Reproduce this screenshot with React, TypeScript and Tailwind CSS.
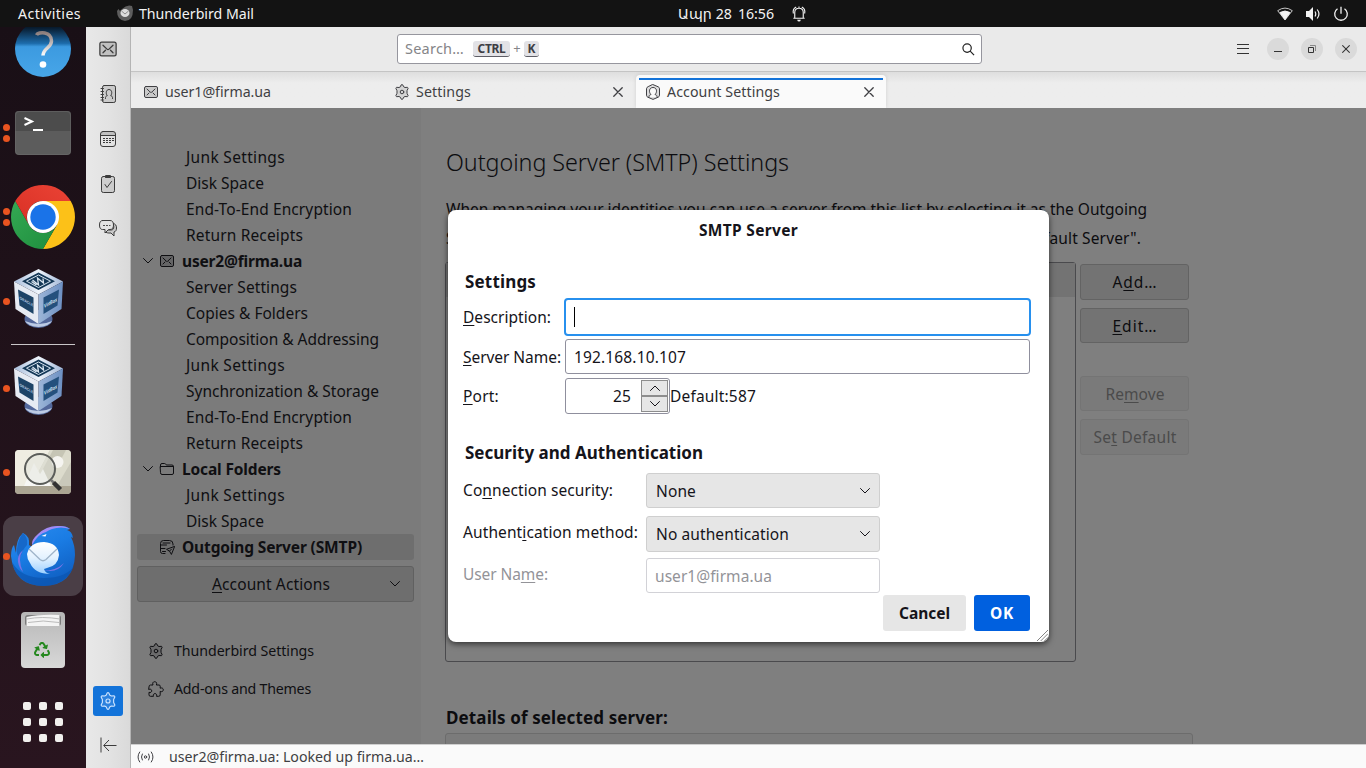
import { useLayoutEffect, useRef, useState } from 'react';
import type { ReactNode } from 'react';
import { FaRecycle } from 'react-icons/fa';

/** Single-line label whose tracking is adjusted so that it spans a set width. */
function Fit({ w, children, className = '' }: { w: number; children: ReactNode; className?: string }) {
  const ref = useRef<HTMLSpanElement>(null);
  const [spacing, setSpacing] = useState(0);
  useLayoutEffect(() => {
    const el = ref.current;
    if (!el) return;
    const count = (el.textContent || '').length || 1;
    setSpacing((w - el.getBoundingClientRect().width) / count);
  }, [w]);
  return (
    <span ref={ref} className={`inline-block shrink-0 whitespace-pre ${className}`} style={{ letterSpacing: `${spacing}px` }}>
      {children}
    </span>
  );
}

/** Label set slightly low in its row. */
function Label({ w, children, className = '' }: { w: number; children: ReactNode; className?: string }) {
  return <Fit w={w} className={`pt-0.5 ${className}`}>{children}</Fit>;
}

function Key({ children }: { children: string }) {
  return <span className="underline decoration-1 underline-offset-2">{children}</span>;
}

/* ---------- line icons ---------- */

type IconProps = { className?: string };
const base = { viewBox: '0 0 16 16', fill: 'none', stroke: 'currentColor', strokeLinecap: 'round', strokeLinejoin: 'round' } as const;

const Mail = ({ className = 'size-4' }: IconProps) => (
  <svg {...base} className={`shrink-0 ${className}`}>
    <rect x="1.5" y="2.5" width="13" height="11" rx="1.5" fill="currentColor" fillOpacity=".2" />
    <path d="M4 5l3.2 3.1c.5.5 1.1.5 1.6 0L12 5M4 11l2-2M12 11l-2-2" />
  </svg>
);
const Book = ({ className = 'size-[18px]' }: IconProps) => (
  <svg {...base} viewBox="0 0 18 18" className={`shrink-0 ${className}`}>
    <rect x="3.5" y=".5" width="13" height="17" rx="1.7" fill="currentColor" fillOpacity=".14" />
    <path d="M2 3.500h2.500M2 6.500h2.500M2 9.500h2.500M2 12.500h2.500M2 15h2.500" />
    <path d="M6.500 13.500v-1c0-1 .7-1.500 1.800-1.800C6.500 8.500 7 4.500 10 4.500s3.500 4 1.700 6.200c1.100.3 1.800.8 1.800 1.800v1" />
  </svg>
);
const Calendar = ({ className = 'size-[18px]' }: IconProps) => (
  <svg {...base} viewBox="0 0 18 18" className={`shrink-0 ${className}`}>
    <path d="M1.500 5.500V4q0-2.500 2.500-2.500h10q2.500 0 2.500 2.500v1.500z" fill="currentColor" fillOpacity=".2" stroke="none" />
    <rect x="1.500" y="1.500" width="15" height="15" rx="2.500" />
    <path d="M2 5.500h14" />
    <path strokeDasharray="2 1" strokeLinecap="butt" d="M4 8.500h11M4 10.500h11M4 12.500h8" />
  </svg>
);
const Tasks = ({ className = 'size-[18px]' }: IconProps) => (
  <svg {...base} viewBox="0 0 18 18" className={`shrink-0 ${className}`}>
    <rect x="2.500" y="1.500" width="13" height="16" rx="1.800" fill="currentColor" fillOpacity=".13" />
    <path d="M5.500 1.500l1-1h5l1 1M6.500 2.500h5M6 9.500l2 3 4.500-6" />
  </svg>
);
const Chat = ({ className = 'size-5' }: IconProps) => (
  <svg {...base} viewBox="0 0 20 20" className={`shrink-0 ${className}`}>
    <path d="M15.500 4.500c2 .5 3 1.800 3 4.500 0 2-.6 3.500-2.500 4v4l-3-3c-3 .2-5-.2-6-1.500l3-1.500h3c2 0 2.800-1 2.800-3z" fill="currentColor" fillOpacity=".14" />
    <path d="M4.500 1.500h7.500q3.500 0 3.500 4.500t-3.500 4.500h-1.500L7 14v-3.500H4.500Q1.500 10.500 1.500 6t3-4.500z" fill="#e2e2e2" />
    <path d="M5.500 6.500h1M8.500 6.500h1M11.500 6.500h.5" />
  </svg>
);
const Gear = ({ className = 'size-4' }: IconProps) => (
  <svg {...base} className={`shrink-0 ${className}`}>
    <path d="M7.300.8q.7-.5 1.400 0l1 2 1.300.7 2.300-.2q.8.300.8 1.100L13 6.700v2.600l1.100 2.300q0 .8-.8 1.100l-2.300-.2-1.300.7-1 2q-.7.500-1.400 0l-1-2-1.300-.7-2.300.2q-.8-.3-.8-1.100L3 9.300V6.700L1.900 4.400q0-.8.8-1.100l2.300.2 1.300-.7z" fill="currentColor" fillOpacity=".14" />
    <circle cx="8" cy="8" r="1.800" />
  </svg>
);
const Account = ({ className = 'size-4' }: IconProps) => (
  <svg {...base} className={`shrink-0 ${className}`}>
    <path d="M8 .6l5.200 2.200q1.300.6 1.300 2v6.400q0 1.400-1.300 2L8 15.400l-5.200-2.200q-1.300-.6-1.300-2V4.800q0-1.400 1.300-2z" fill="currentColor" fillOpacity=".15" />
    <path d="M4 13v-.7c0-.9.800-1.300 2-1.800C3.500 8.300 4 3.500 8 3.500s4.500 4.800 2 7c1.200.5 2 .9 2 1.800v.7" fill="#fafafa" />
  </svg>
);
const Folder = () => (
  <svg {...base} className="size-4 shrink-0">
    <path d="M1.500 5.500h13V12q0 1.500-1.500 1.500H3Q1.500 13.500 1.500 12zM1.500 6V4q0-1.500 1.500-1.500h2.500q1 0 1.500 1l.3.500H13q1.500 0 1.500 1.500v1" />
  </svg>
);
const Outgoing = () => (
  <svg {...base} className="size-4 shrink-0">
    <path d="M6 14.500H3.500q-2 0-2-2v-8q0-3 3-3h6q3.500 0 3.500 3.500v1M1.500 6h6M4 4h7M1.500 9.500h4.500M3.500 12.500h3" />
    <path d="M15.300 7.500l-7.800 2.800 3 1.800 1.700 3zM10.500 12.100l2-2" />
  </svg>
);
const Puzzle = () => (
  <svg {...base} className="size-4 shrink-0">
    <path d="M1 5.500Q1 4 2.500 4H5c-.8-1.800 0-3.300 1.700-3.300S9.200 2.200 8.400 4H11q1.200 0 1.200 1.200v2c1.700-.7 3.100.1 3.100 1.600s-1.400 2.300-3.100 1.600v3.400q0 1.500-1.500 1.500H8.500c.6-1.600-.1-2.700-1.500-2.700s-2.100 1.100-1.500 2.700H2.500Q1 15.300 1 13.800v-2.500c1.600.6 2.700-.1 2.700-1.500S2.600 7.700 1 8.300z" />
  </svg>
);
const Close = ({ className = 'size-[10px]' }: IconProps) => (
  <svg viewBox="0 0 10 10" className={`shrink-0 ${className}`} fill="none" stroke="currentColor" strokeWidth="1.300" strokeLinecap="round">
    <path d="M.8.8l8.400 8.400M9.200.8L.8 9.200" />
  </svg>
);
const Chevron = ({ className = '' }: IconProps) => (
  <svg viewBox="0 0 12 8" className={`h-2 w-3 shrink-0 ${className}`} fill="none" stroke="currentColor" strokeLinecap="round" strokeLinejoin="round">
    <path d="M1.500 1.500L6 6l4.500-4.500" />
  </svg>
);

/* ---------- dock artwork ---------- */

const HelpArt = () => (
  <svg viewBox="0 0 64 64" className="size-16">
    <defs>
      <linearGradient id="helpFill" x1="0" y1="0" x2="0" y2="1">
        <stop offset=".12" stopColor="#081b2e" />
        <stop offset=".4" stopColor="#1d6cab" />
        <stop offset=".46" stopColor="#3c9ae0" />
        <stop offset="1" stopColor="#47a6e8" />
      </linearGradient>
      <linearGradient id="helpMark" x1="0" y1="0" x2="0" y2="1">
        <stop offset="0" stopColor="#8d7e7c" />
        <stop offset="1" stopColor="#fff" />
      </linearGradient>
    </defs>
    <circle cx="32" cy="32" r="28" fill="url(#helpFill)" />
    <path d="M25.500 18c2-3.500 15-4 15 6 0 7-8.500 7-8.500 14.500" fill="none" stroke="url(#helpMark)" strokeWidth="3.500" />
    <circle cx="32" cy="47.500" r="3.300" fill="#fff" />
  </svg>
);
const TerminalArt = () => (
  <svg viewBox="0 0 64 64" className="size-16">
    <rect x="4" y="10" width="56" height="44" rx="4" fill="#5c5c5c" />
    <path d="M4 30V14q0-4 4-4h48q4 0 4 4v16z" fill="#4c4c4c" />
    <path d="M13.500 17l7.500 3.500-7.500 3.500" fill="none" stroke="#fff" strokeWidth="2" />
    <path d="M22 29h10" stroke="#fff" strokeWidth="2" />
    <rect x="4.500" y="10.500" width="55" height="43" rx="3.500" fill="none" stroke="#6d6d6d" strokeOpacity=".5" />
  </svg>
);
const ChromeArt = () => (
  <svg viewBox="0 0 64 64" className="size-16">
    <defs>
      <linearGradient id="chRed" x1="0" y1="1" x2="1" y2="0"><stop offset="0" stopColor="#d93025" /><stop offset="1" stopColor="#ea4335" /></linearGradient>
      <linearGradient id="chGreen" x1="0" y1="0" x2="1" y2="1"><stop offset="0" stopColor="#34a853" /><stop offset="1" stopColor="#1e8e3e" /></linearGradient>
    </defs>
    <path d="M32 16h27.700A32 32 0 0 1 32 64L45.900 40z" fill="#fcc118" />
    <path d="M45.900 40L32 64A32 32 0 0 1 4.300 16L18.100 40A16 16 0 0 0 45.900 40z" fill="url(#chGreen)" />
    <path d="M4.300 16A32 32 0 0 1 59.700 16H32A16 16 0 0 0 18.100 40z" fill="url(#chRed)" />
    <circle cx="32" cy="32" r="16" fill="#fff" />
    <circle cx="32" cy="32" r="12.700" fill="#1a73e8" />
  </svg>
);
const BoxArt = () => (
  <svg viewBox="0 2 64 64" className="size-16">
    <defs>
      <linearGradient id="vbTop" x1="0" x2="1"><stop offset="0" stopColor="#a9bedc" /><stop offset=".5" stopColor="#eef4fb" /><stop offset="1" stopColor="#a3b8d8" /></linearGradient>
      <linearGradient id="vbRight" x1="0" x2="1"><stop offset="0" stopColor="#9db6d8" /><stop offset="1" stopColor="#6c8fc2" /></linearGradient>
    </defs>
    <ellipse cx="27.500" cy="52" rx="14" ry="9" fill="#53689b" />
    <path d="M14 54a14 8 0 0 0 27 0q-13 6-27 0z" fill="#bccbe4" />
    <path d="M27.500 2L52 14.500 27.500 27.500 3 14.500z" fill="url(#vbTop)" />
    <path d="M3 14.500l24.500 13V57L4.500 42z" fill="#e6ebf3" />
    <path d="M52 14.500L27.500 27.500V57L50.500 42z" fill="url(#vbRight)" />
    <path d="M27.500 5.500L44 14.200 27.500 23 11 14.200z" fill="#143857" />
    <path d="M27.500 8L39.500 14.200 27.500 20.500 15.500 14.200z" fill="none" stroke="#d4e2ef" />
    <path d="M21.500 13l6 5-1-7 6 5-.5-4.500M20.500 14.500l5 3.500" fill="none" stroke="#dce8f3" strokeWidth="1.300" />
    <path d="M7 22.500l15.500 8v16.500l-14-8.500z" fill="#1d4467" />
    <path d="M48 22.500l-15.500 8v16.500l14-8.500z" fill="#24507d" />
    <text transform="matrix(.82 .46 0 1 8.500 32)" fill="#b7cbe2" fontSize="4" fontFamily="Liberation Sans, sans-serif" fontWeight="700">ORACLE</text>
    <text transform="matrix(.8 -.42 0 1.200 33 41)" fill="#dbe8f6" fontSize="4.600" fontFamily="Liberation Sans, sans-serif" fontWeight="700">VirtBox</text>
  </svg>
);
const ViewerArt = () => (
  <svg viewBox="0 0 64 64" className="size-16">
    <rect x="4" y="10" width="56" height="44" rx="4" fill="#c9c8ba" />
    <path d="M8 10h31L20 46H4V14q0-4 4-4z" fill="#efede2" />
    <path d="M39 10h17q4 0 4 4v8L46 46H20z" fill="#dcdbcc" />
    <path d="M42 10h13L36 46h-13z" fill="#c6c5b5" />
    <circle cx="46.500" cy="22" r="6" fill="#f5f4f0" />
    <path d="M13 46l10-23 6 11 3-5 8 17z" fill="#f7f7f4" />
    <path d="M4 46h56v4q0 4-4 4H8q-4 0-4-4z" fill="#aba593" />
    <circle cx="29" cy="29" r="15" fill="#dfe3dc" fillOpacity=".45" stroke="#5b5d5a" strokeWidth="2" />
    <path d="M40 40l3 3" stroke="#777" strokeWidth="2.500" />
    <path d="M42.500 42.500l7 7" stroke="#333" strokeWidth="4.500" />
  </svg>
);
const BirdArt = () => (
  <svg viewBox="0 0 64 64" className="size-16">
    <defs>
      <linearGradient id="bird" x1="0" y1="0" x2=".5" y2="1"><stop offset="0" stopColor="#2b8cf0" /><stop offset=".5" stopColor="#1a7ce4" /><stop offset="1" stopColor="#1061c4" /></linearGradient>
      <linearGradient id="mail" x1="0" y1="0" x2="0" y2="1"><stop offset="0" stopColor="#fff" /><stop offset=".5" stopColor="#e3f2ff" /><stop offset="1" stopColor="#9ccfff" /></linearGradient>
    </defs>
    <path d="M0 32Q0 24 3 21l2 8Q5 15 12 9q7 3 6 12l3 2q0-7 8-13Q38 2 49 2q7 0 10 3l-3 1q5 1 6 8l-2-1q4 8 4 18Q63 61 33 62 3 62 0 32z" fill="url(#bird)" />
    <path d="M12 9q5 4 4 12-6 6-7 15-4-7-3-11Q7 15 12 9z" fill="#1668c9" />
    <path d="M1 38q4 22 30 24 24 0 32-20-8 12-30 12Q10 54 1 38z" fill="#0b53ae" fillOpacity=".65" />
    <path d="M21 21q-1-5 6-11Q36 1 49 2q6 0 10 3-9-3-18 0-3 1-6 3-7 1-14 13z" fill="#a18bf5" />
    <path d="M12 26q-6 9 0 22-4-4-5-10-1-7 5-12zM31 47q14 0 22-8-5 8-14 8z" fill="#7b74e6" />
    <path d="M30.500 12l5-2-1 2.500z" fill="#fff" />
    <path d="M16 30q3-12 17-12 14 1 15 13-1 11-12 13l-3 1q1 4 6 5-15 0-20-11-3-4-3-9z" fill="url(#mail)" />
    <path d="M18 25l11 10.500q3 2.500 6 0L46 25" fill="none" stroke="#9fb4c9" strokeWidth="1.300" />
  </svg>
);
const TrashArt = () => (
  <svg viewBox="0 0 64 64" className="size-16">
    <defs>
      <linearGradient id="bin" x1="0" y1="0" x2="0" y2="1"><stop offset="0" stopColor="#b7b7b7" /><stop offset="1" stopColor="#d8d8d8" /></linearGradient>
    </defs>
    <rect x="10" y="4" width="44" height="56" rx="4" fill="url(#bin)" />
    <rect x="14" y="7" width="36" height="11" rx="3" fill="#7b7b7b" />
    <path d="M15.500 18V9q14-3 33-2v11z" fill="#f4f4f4" />
    <path d="M16 11q15-3 33 0M17 14.500q15-3 31 0" fill="none" stroke="#bbb" />
    <FaRecycle x="23" y="34" width="18" height="18" color="#25881f" />
  </svg>
);

type DockEntry = { art: () => ReactNode; dots: number; active?: boolean };
const dockTop: DockEntry[] = [
  { art: TerminalArt, dots: 2 },
  { art: ChromeArt, dots: 2 },
  { art: BoxArt, dots: 1 },
];
const dockBottom: DockEntry[] = [
  { art: BoxArt, dots: 1 },
  { art: ViewerArt, dots: 1 },
  { art: BirdArt, dots: 1, active: true },
  { art: TrashArt, dots: 0 },
];

function DockItem({ art: Art, dots, active }: DockEntry) {
  return (
    <div className={`mx-[3px] my-0.5 flex h-20 shrink-0 items-center rounded-xl ${active ? 'bg-[#4a3e46]' : ''}`}>
      <div className="mr-px flex w-[7px] flex-col gap-1">
        {Array.from({ length: dots }, (_, i) => (
          <span key={i} className="size-[7px] rounded-full bg-[#e95420]" />
        ))}
      </div>
      <Art />
    </div>
  );
}

function Dock() {
  return (
    <nav className="flex w-[86px] shrink-0 flex-col overflow-hidden bg-linear-to-b from-[#190f16] to-[#29151f]">
      <div className="flex h-16 shrink-0 items-end justify-center overflow-hidden pb-[10px]"><HelpArt /></div>
      {dockTop.map((d, i) => <DockItem key={i} {...d} />)}
      <div className="mx-[11px] mt-px h-px shrink-0 bg-[#c9c6c8]" />
      <div className="h-px shrink-0" />
      {dockBottom.map((d, i) => <DockItem key={i} {...d} />)}
      <div className="ml-[23px] mt-5 grid w-10 grid-cols-3 gap-2">
        {Array.from({ length: 9 }, (_, i) => <span key={i} className="size-2 rounded-xs bg-[#f1f0ee]" />)}
      </div>
    </nav>
  );
}

/* ---------- chrome ---------- */

function TopBar() {
  return (
    <header className="grid h-[27px] shrink-0 grid-cols-[678px_1fr_auto] items-center bg-[#131313] text-[14.2px] text-[#f2f2f2]">
      <div className="flex items-center pl-[18px]">
        <Fit w={63}>Activities</Fit>
        <svg viewBox="0 0 18 18" className="ml-[35px] size-[18px]">
          <path d="M1 7l1.500-2L4 7l2-2q5-5 10-3l1 4q0 11-8 11Q1 16 1 7z" fill="#5e5e5e" />
          <ellipse cx="9" cy="9" rx="4.500" ry="4" fill="#dedede" />
          <path d="M5.500 7l3.500 3 3.500-3" fill="none" stroke="#8c8c8c" />
        </svg>
        <Fit w={115} className="ml-[5px]">Thunderbird Mail</Fit>
      </div>
      <div className="flex items-center">
        <Fit w={54}>Ապր 28</Fit>
        <Fit w={36} className="ml-[6px]">16:56</Fit>
        <svg viewBox="0 0 16 18" className="ml-[17px] h-[17px] w-4" fill="none" stroke="currentColor" strokeWidth="1.200">
          <path d="M3.500 13.500V8q0-4.500 4.500-4.500T12.500 8v5.500M2 14h12M2 9q-1-5 3-7M14 9q1-5-3-7M8 1.500v2" />
          <path d="M6 15.500h4q-.5 2-2 2t-2-2z" fill="currentColor" stroke="none" />
        </svg>
      </div>
      <div className="flex items-center gap-3 pr-[17px]">
        <svg viewBox="0 0 16 16" className="size-4" fill="none" stroke="currentColor">
          <path d="M.7 4.700Q8-.5 15.300 4.700L8 14z" strokeWidth=".8" />
          <path d="M3 6.500Q8 3.500 13 6.500L8 13.500z" fill="currentColor" />
        </svg>
        <svg viewBox="0 0 16 16" className="size-4" fill="none" stroke="currentColor">
          <path d="M1 5h3l4-4v14l-4-4H1z" fill="currentColor" stroke="none" />
          <path d="M10 5.500q1.500 2.500 0 5M12.200 3.500q3.500 4.500 0 9" strokeWidth="1.200" />
        </svg>
        <svg viewBox="0 0 16 16" className="size-4" fill="none" stroke="currentColor" strokeWidth="1.300">
          <path d="M4.500 2.700a6.300 6.300 0 1 0 7 0M8 .7v7" />
        </svg>
      </div>
    </header>
  );
}

function Spaces() {
  return (
    <aside className="flex w-[45px] shrink-0 flex-col items-center border-r border-[#b4b4b4] bg-linear-to-r from-[#e8e8e8] via-[#e3e3e3] to-[#dadada] text-[#3c3c3c]">
      <div className="-mt-px flex h-[225px] flex-col items-center">
        {[Mail, Book, Calendar, Tasks, Chat].map((Icon, i) => (
          <div key={i} className="grid h-[45px] w-11 place-items-center pt-px">
            <Icon className={i === 0 || i === 4 ? 'size-5' : 'size-[18px]'} />
          </div>
        ))}
      </div>
      <div className="mt-auto grid size-[30px] shrink-0 place-items-center rounded-[3px] bg-[#1373d9] text-[#cfe5ff]">
        <Gear className="size-[18px]" />
      </div>
      <svg viewBox="0 0 17 16" className="mb-[15px] mt-[21px] h-4 w-[17px] shrink-0" fill="none" stroke="currentColor">
        <path d="M1 .5v15M16.500 8.500H4M9 3L3.700 8.500 9 14" />
      </svg>
    </aside>
  );
}

function SearchBar() {
  return (
    <div className="flex h-[45px] shrink-0 items-center border-b border-[#c4c4c4] bg-[#eaeaea]">
      <div className="ml-[266px] flex h-[30px] w-[585px] items-center rounded-[3px] border border-[#96969e] bg-white px-[7px] text-[14.500px] text-[#858588]">
        <Fit w={59}>Search…</Fit>
        <kbd className="ml-[9px] flex h-4 w-[37px] items-center justify-center rounded-[3px] border-b border-[#5d5d66] bg-[#e2e2e6] font-['Noto_Sans'] text-[12px] font-bold text-[#3d3d44]"><Fit w={28}>CTRL</Fit></kbd>
        <span className="w-[14px] text-center text-[13px]">+</span>
        <kbd className="flex h-4 w-[15px] items-center justify-center rounded-[3px] border-b border-[#5d5d66] bg-[#e2e2e6] font-['Noto_Sans'] text-[12px] font-bold text-[#3d3d44]">K</kbd>
        <svg viewBox="0 0 14 14" className="ml-auto mr-[-1px] size-[13px]" fill="none" stroke="#222" strokeWidth="1.300">
          <circle cx="5.500" cy="5.500" r="4.500" /><path d="M8.800 8.800L13 13" />
        </svg>
      </div>
      <div className="ml-auto flex items-center pr-[9px] text-[#333]">
        <svg viewBox="0 0 12 10" className="mr-[18px] h-[10px] w-3" stroke="currentColor"><path d="M0 .5h12M0 4.500h12M0 9.500h12" /></svg>
        <span className="mr-3 grid size-[22px] place-items-center rounded-full bg-[#dadada]">
          <svg viewBox="0 0 8 8" className="size-2" stroke="currentColor"><path d="M0 6.500h8" /></svg>
        </span>
        <span className="mr-3 grid size-[22px] place-items-center rounded-full bg-[#dadada]">
          <svg viewBox="0 0 8 8" className="size-2" fill="none" stroke="currentColor"><path d="M.5 2.500h5v5h-5z" /><path d="M2 .5h5.500V6" stroke="#888" /></svg>
        </span>
        <span className="grid size-[22px] place-items-center rounded-full bg-[#dadada]"><Close className="size-2" /></span>
      </div>
    </div>
  );
}

function Tabs() {
  return (
    <div className="flex h-9 shrink-0 bg-linear-to-b from-[#dedede] via-[#ededed] via-30% to-[#ededed] text-[14.200px] text-[#3f3f43]">
      <div className="flex h-10 w-[252px] items-center pl-3">
        <Mail />
        <Fit w={106} className="ml-[6px]">user1@firma.ua</Fit>
      </div>
      <div className="flex h-10 w-[253px] items-center pl-[11px]">
        <Gear />
        <Fit w={55} className="ml-[6px]">Settings</Fit>
        <Close className="ml-auto mr-[13px] size-[10px]" />
      </div>
      <div className="mt-[3px] flex h-[33px] w-[250px] flex-col rounded-t bg-[#fafafa] shadow-[0_0_4px_#0000001f]">
        <div className="mx-[3px] mt-[3px] h-0.5 shrink-0 bg-[#1373d9]" />
        <div className="flex h-6 items-center pl-[9px]">
          <Account />
          <Fit w={113} className="ml-[6px]">Account Settings</Fit>
          <Close className="ml-auto mr-3 size-[10px]" />
        </div>
      </div>
    </div>
  );
}

/* ---------- account tree ---------- */

type Row = { label: string; w: number; icon?: () => ReactNode; open?: boolean; selected?: boolean };
const rows: Row[] = [
  { label: 'Junk Settings', w: 99 },
  { label: 'Disk Space', w: 78 },
  { label: 'End-To-End Encryption', w: 166 },
  { label: 'Return Receipts', w: 117 },
  { label: 'user2@firma.ua', w: 120, icon: () => <Mail />, open: true },
  { label: 'Server Settings', w: 111 },
  { label: 'Copies & Folders', w: 122 },
  { label: 'Composition & Addressing', w: 193 },
  { label: 'Junk Settings', w: 99 },
  { label: 'Synchronization & Storage', w: 193 },
  { label: 'End-To-End Encryption', w: 166 },
  { label: 'Return Receipts', w: 117 },
  { label: 'Local Folders', w: 99, icon: Folder, open: true },
  { label: 'Junk Settings', w: 99 },
  { label: 'Disk Space', w: 78 },
  { label: 'Outgoing Server (SMTP)', w: 180, icon: Outgoing, selected: true },
];

function Tree() {
  return (
    <section className="flex w-[290px] shrink-0 flex-col bg-[#7b7b7b] px-[6px] pr-[7px] pt-9 text-[15.500px] text-[#0f0f12]">
      {rows.map((r, i) => (
        <div key={i} className={`flex h-[26px] shrink-0 items-center rounded-[3px] ${r.selected ? 'bg-[#6e6e6e]' : ''}`}>
          {r.icon ? (
            <>
              <div className="flex w-[22px] justify-center">{r.open && <Chevron />}</div>
              <r.icon />
              <Label w={r.w} className="ml-[7px] font-bold">{r.label}</Label>
            </>
          ) : (
            <Label w={r.w} className="ml-[49px]">{r.label}</Label>
          )}
        </div>
      ))}
      <button className="mt-[6px] flex h-9 shrink-0 items-center rounded-[3px] border border-[#606060] bg-[#6e6e6e] pl-[74px] pr-3">
        <Label w={118}><Key>A</Key>ccount Actions</Label>
        <Chevron className="ml-auto" />
      </button>
      <div className="mt-[30px] flex h-[38px] shrink-0 items-center pl-[11px] text-[14.200px]">
        <Gear /><Fit w={140} className="ml-[10px]">Thunderbird Settings</Fit>
      </div>
      <div className="flex h-[38px] shrink-0 items-center pl-[11px] text-[14.200px]">
        <Puzzle /><Fit w={137} className="ml-[10px]">Add-ons and Themes</Fit>
      </div>
    </section>
  );
}

const sideBtn = 'flex w-[109px] shrink-0 items-center justify-center rounded-[3px] border pl-px';

function ServerPane() {
  return (
    <section className="flex min-w-0 flex-1 flex-col overflow-hidden bg-[#7f7f7f] pl-6 text-[15.500px] text-[#0c0c0f]">
      <h1 className="mt-[38px] flex h-8 items-center pl-px text-[23.300px] font-light"><Fit w={343}>Outgoing Server (SMTP) Settings</Fit></h1>
      <div className="mt-[17px] pl-px leading-[29px]">
        <div className="flex h-[29px]"><Fit w={701}>When managing your identities you can use a server from this list by selecting it as the Outgoing</Fit></div>
        <div className="flex h-[29px] w-[695px] justify-between"><Fit w={182}>Server (SMTP), or select</Fit><Fit w={156}>"Use Default Server".</Fit></div>
      </div>
      <div className="mt-[9px] flex gap-1">
        <div className="h-[400px] w-[631px] rounded-[3px] border border-[#4a4a4d]"><div className="h-[34px] bg-[#737373]" /></div>
        <div className="flex flex-col pt-0.5">
          <button className={`${sideBtn} h-9 border-[#636363] bg-[#737373]`}><Label w={45}>A<Key>d</Key>d…</Label></button>
          <button className={`${sideBtn} mt-2 h-[35px] border-[#636363] bg-[#737373]`}><Label w={45}><Key>E</Key>dit…</Label></button>
          <button className={`${sideBtn} mt-[33px] h-[35px] border-[#747474] bg-[#7a7a7a] text-[#4b4b4b]`}><Label w={59}>Re<Key>m</Key>ove</Label></button>
          <button className={`${sideBtn} mt-2 h-9 border-[#747474] bg-[#7a7a7a] text-[#4b4b4b]`}><Label w={83}>Se<Key>t</Key> Default</Label></button>
        </div>
      </div>
      <h2 className="mt-11 flex h-[22px] items-center pl-px text-[17px] font-bold"><Label w={222}>Details of selected server:</Label></h2>
      <div className="mt-[5px] h-10 w-[748px] shrink-0 rounded-[3px] border border-[#6c6c6c] bg-[#7b7b7b]" />
    </section>
  );
}

/* ---------- dialog ---------- */

function Dialog() {
  return (
    <div role="dialog" className="absolute left-[448px] top-[210px] flex h-[432px] w-[601px] flex-col rounded-lg bg-white text-[15.500px] text-[#15141a] shadow-[0_2px_6px_#0000009c]">
      <div className="flex h-10 shrink-0 items-center justify-center font-bold"><Label w={99}>SMTP Server</Label></div>
      <h2 className="ml-[17px] mt-5 flex h-6 shrink-0 items-center text-[17px] font-bold"><Fit w={71}>Settings</Fit></h2>
      <div className="ml-[15px] mt-1 flex h-[38px] shrink-0 items-center">
        <div className="flex w-[101px]"><Label w={88}><Key>D</Key>escription:</Label></div>
        <div className="flex h-[38px] w-[467px] items-center rounded border-2 border-[#2790ee] pl-2"><span className="h-5 w-px bg-black" /></div>
      </div>
      <div className="ml-[15px] mt-[3px] flex h-[35px] shrink-0 items-center">
        <div className="flex w-[102px]"><Label w={98}><Key>S</Key>erver Name:</Label></div>
        <div className="flex h-[35px] w-[465px] items-center rounded-[3px] border border-[#8f8f9d] pl-2"><Label w={112}>192.168.10.107</Label></div>
      </div>
      <div className="ml-[15px] mt-1 flex h-9 shrink-0 items-center">
        <div className="flex w-[102px]"><Label w={36}><Key>P</Key>ort:</Label></div>
        <div className="flex h-9 w-[105px] items-center justify-end rounded-[3px] border border-[#8f8f9d] pr-px">
          <Label w={18} className="mr-[10px]">25</Label>
          <div className="flex h-8 w-[27px] flex-col border border-[#8d8d8d] bg-[#e6e6e6]">
            <div className="grid flex-1 place-items-center border-b-2 border-[#8d8d8d]"><Chevron className="rotate-180" /></div>
            <div className="grid flex-1 place-items-center"><Chevron /></div>
          </div>
        </div>
        <Label w={86}>Default:587</Label>
      </div>
      <h2 className="ml-[17px] mt-[27px] flex h-6 shrink-0 items-center text-[17px] font-bold"><Fit w={238}>Security and Authentication</Fit></h2>
      <div className="ml-[15px] mt-2 flex h-[35px] shrink-0">
        <div className="flex h-[34px] w-[183px] items-center"><Label w={150}>Co<Key>n</Key>nection security:</Label></div>
        <div className="flex w-[234px] items-center rounded-[3px] border border-[#cfcfcf] bg-[#e6e6e6] pl-[9px] pr-2"><Label w={40}>None</Label><Chevron className="ml-auto" /></div>
      </div>
      <div className="ml-[15px] mt-2 flex h-9 shrink-0">
        <div className="flex h-8 w-[183px] items-center"><Label w={175}>Authent<Key>i</Key>cation method:</Label></div>
        <div className="flex w-[234px] items-center rounded-[3px] border border-[#cfcfcf] bg-[#e6e6e6] pl-[9px] pr-2"><Label w={133}>No authentication</Label><Chevron className="ml-auto" /></div>
      </div>
      <div className="ml-[15px] mt-[6px] flex h-[35px] shrink-0 text-[#939398]">
        <div className="flex h-8 w-[183px] items-center"><Label w={85}>User Na<Key>m</Key>e:</Label></div>
        <div className="flex w-[234px] items-center rounded-[3px] border border-[#d2d2d7] pl-2"><Label w={117}>user1@firma.ua</Label></div>
      </div>
      <div className="mr-[19px] mt-0.5 flex h-9 shrink-0 justify-end gap-2 font-bold">
        <button className="flex w-[83px] items-center justify-center rounded-[3px] bg-[#e6e6e6]"><Label w={51}>Cancel</Label></button>
        <button className="flex w-14 items-center justify-center rounded-[3px] bg-[#0060df] text-white"><Label w={24}>OK</Label></button>
      </div>
      <svg viewBox="0 0 12 12" className="absolute bottom-px right-px size-[11px]" stroke="#777" fill="none"><path d="M0 12L12 0M4 12l8-8M8 12l4-4" /></svg>
    </div>
  );
}

export default function App() {
  return (
    <div className="relative flex h-[768px] w-[1366px] flex-col overflow-hidden font-['Noto_Sans','DejaVu_Sans',sans-serif]">
      <TopBar />
      <div className="flex min-h-0 flex-1">
        <Dock />
        <Spaces />
        <main className="flex min-w-0 flex-1 flex-col">
          <SearchBar />
          <Tabs />
          <div className="flex min-h-0 flex-1"><Tree /><ServerPane /></div>
          <footer className="flex h-6 shrink-0 items-center border-t border-[#cfcfcf] bg-[#fafafa] pl-[6px] text-[14.200px] text-[#3f3f43]">
            <svg viewBox="0 0 17 12" className="h-3 w-[17px]" fill="none" stroke="currentColor" strokeLinecap="round">
              <circle cx="8.500" cy="6" r="1.200" />
              <path d="M5.300 3q-1.800 3 0 6M11.700 3q1.800 3 0 6M2.700 1q-3.500 5 0 10M14.300 1q3.500 5 0 10" />
            </svg>
            <Fit w={255} className="ml-[15px]">user2@firma.ua: Looked up firma.ua…</Fit>
          </footer>
        </main>
      </div>
      <Dialog />
    </div>
  );
}
